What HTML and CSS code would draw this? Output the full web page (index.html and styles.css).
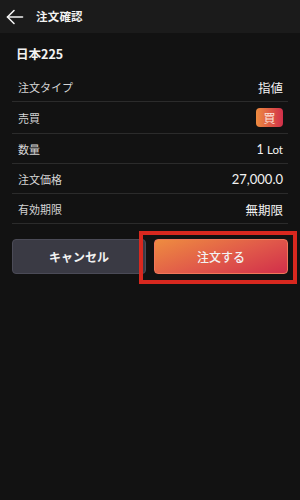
FILE: index.html
```html
<!DOCTYPE html>
<html lang="ja">
<head>
  <meta charset="UTF-8">
  <meta name="viewport" content="width=device-width, initial-scale=1.0">
  <title>注文確認</title>
  <link rel="stylesheet" href="styles.css">
</head>

<body>
  <div class="screen">
    <header class="header">
      <button class="back-btn" aria-label="戻る">
        <svg width="18" height="16" viewBox="0 0 18 16" fill="none" stroke="#f2f2f2" stroke-width="1.6" stroke-linecap="round" stroke-linejoin="round">
          <path d="M16.5 8H1.5"/>
          <path d="M8 1.5L1.5 8L8 14.5"/>
        </svg>
      </button>
      <h1 class="title">注文確認</h1>
    </header>

    <main class="content">
      <h2 class="product">日本225</h2>

      <div class="order-list">
        <div class="order-row">
          <span class="row-label">注文タイプ</span>
          <span class="row-value">指値</span>
        </div>
        <div class="order-row order-row-tall">
          <span class="row-label">売買</span>
          <span class="side-badge">買</span>
        </div>
        <div class="order-row">
          <span class="row-label">数量</span>
          <span class="row-value">1 <span class="unit">Lot</span></span>
        </div>
        <div class="order-row">
          <span class="row-label">注文価格</span>
          <span class="row-value num">27,000.0</span>
        </div>
        <div class="order-row">
          <span class="row-label">有効期限</span>
          <span class="row-value">無期限</span>
        </div>
      </div>

      <div class="actions">
        <button class="btn btn-cancel">キャンセル</button>
        <button class="btn btn-order">注文する</button>
      </div>
    </main>

    <div class="highlight" aria-hidden="true"></div>
  </div>
</body>

</html>
```

FILE: styles.css
```css
:root {
  --background: #121212;
  --header: #1b1b1b;
  --divider: #2b2b2b;
  --text: #f2f2f2;
  --text-secondary: #d4d4d4;
  --cancel: #3a3a44;
  --cancel-border: #4b4b57;
  --accent-from: #ee8c40;
  --accent-to: #d12f4a;
  --highlight: #d8281f;
}

* {
  margin: 0;
  padding: 0;
  box-sizing: border-box;
}

body {
  width: 300px;
  height: 500px;
  background: var(--background);
  color: var(--text);
  font-family: Lato, "Noto Sans CJK JP", sans-serif;
  -webkit-font-smoothing: antialiased;
}

.screen {
  position: relative;
  height: 500px;
}

.header {
  display: flex;
  align-items: center;
  height: 33px;
  background: var(--header);
  padding-left: 6px;
}

.back-btn {
  display: flex;
  align-items: center;
  background: none;
  border: none;
  width: 30px;
  height: 33px;
  padding-top: 1px;
}

.title {
  font-family: "Noto Sans CJK JP", sans-serif;
  font-size: 11.5px;
  font-weight: 700;
  line-height: 1;
  letter-spacing: 0.2px;
}

.content {
  padding: 0 12px;
}

.product {
  font-family: "Noto Sans CJK JP", sans-serif;
  font-size: 12.5px;
  font-weight: 700;
  line-height: 1;
  padding: 15px 0 0 4px;
  height: 39px;
}

.order-list {
  display: flex;
  flex-direction: column;
}

.order-row {
  display: flex;
  align-items: center;
  justify-content: space-between;
  height: 30px;
  padding: 0 5px 0 6px;
  border-bottom: 1px solid var(--divider);
}

.order-row-tall {
  height: 32px;
}

.row-label {
  font-family: "Noto Sans CJK JP", sans-serif;
  font-size: 11px;
  color: var(--text-secondary);
  padding-top: 1px;
}

.row-value {
  font-family: Lato, "Noto Sans CJK JP", sans-serif;
  font-size: 12.5px;
  color: var(--text);
  padding-top: 1px;
}

.row-value.num {
  font-size: 13px;
}

.unit {
  font-size: 11.5px;
}

.side-badge {
  display: flex;
  align-items: center;
  justify-content: center;
  width: 27px;
  height: 19px;
  border-radius: 4px;
  background: linear-gradient(90deg, var(--accent-from) 0%, var(--accent-to) 100%);
  font-family: "Noto Sans CJK JP", sans-serif;
  font-size: 12px;
  color: #fbe3da;
}

.actions {
  display: grid;
  grid-template-columns: 1fr 1fr;
  gap: 8px;
  margin-top: 15px;
}

.btn {
  height: 35px;
  border-radius: 4px;
  font-family: "Noto Sans CJK JP", sans-serif;
  font-size: 12px;
  font-weight: 700;
  color: var(--text);
}

.btn-cancel {
  background: var(--cancel);
  border: 1px solid var(--cancel-border);
}

.btn-order {
  background: linear-gradient(160deg, var(--accent-from) 0%, #e0584a 55%, var(--accent-to) 100%);
  border: 1px solid #f2765a;
  font-weight: 500;
}

.highlight {
  position: absolute;
  left: 139px;
  top: 231px;
  width: 158px;
  height: 53px;
  border: 4px solid var(--highlight);
}
```
